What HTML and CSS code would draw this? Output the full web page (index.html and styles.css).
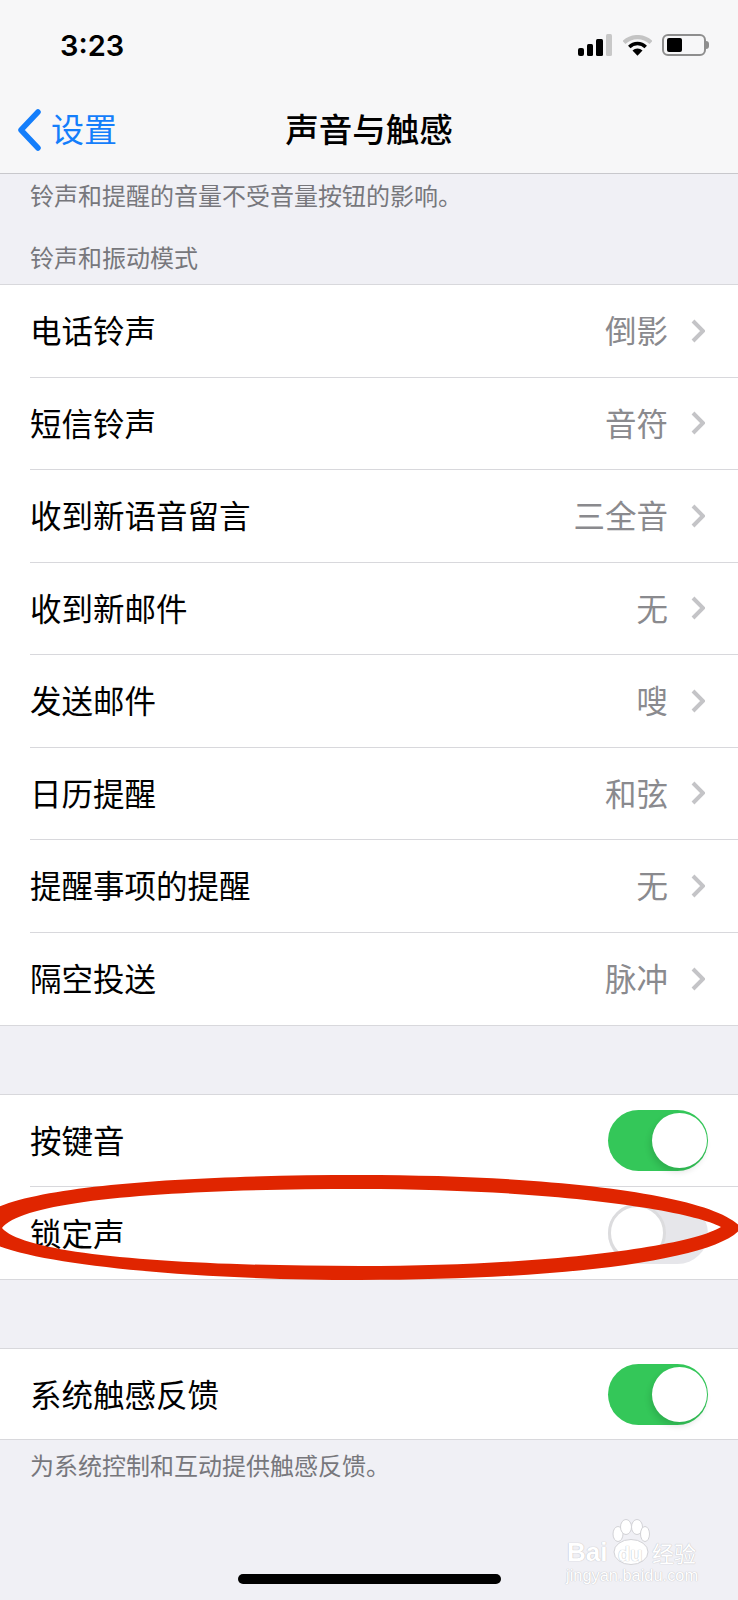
FILE: index.html
```html
<!DOCTYPE html>
<html lang="zh">
<head>
	<meta charset="utf-8">
	<meta name="viewport" content="width=device-width, initial-scale=1">
	<title>声音与触感</title>
	<link rel="stylesheet" href="styles.css">
</head>
<body>
<div class="phone">

<header class="top">
	<div class="status">
		<span class="time">3:23</span>
		<div class="status-icons">
			<svg class="signal" width="34" height="22" viewBox="0 0 34 22">
				<rect x="0" y="14" width="6" height="8" rx="2" fill="#000"/>
				<rect x="9" y="10" width="6" height="12" rx="1.5" fill="#000"/>
				<rect x="18" y="5" width="7" height="17" rx="1.5" fill="#000"/>
				<rect x="28" y="0" width="6" height="22" rx="1.5" fill="#c8c8c8"/>
			</svg>
			<svg class="wifi" width="29" height="21" viewBox="0 0 30 21">
				<path d="M1 7.5 A20 20 0 0 1 29 7.5" fill="none" stroke="#c4c4c4" stroke-width="4.4"/>
				<path d="M6.5 12 A12 12 0 0 1 23.5 12" fill="none" stroke="#000" stroke-width="3.6"/>
				<path d="M15 21 L9.8 15.6 A7.5 7.5 0 0 1 20.2 15.6 Z" fill="#000"/>
			</svg>
			<div class="battery">
				<div class="battery-body"><div class="battery-fill"></div></div>
				<div class="battery-nub"></div>
			</div>
		</div>
	</div>
	<nav class="nav">
		<a class="back">
			<svg width="24" height="42" viewBox="0 0 24 42">
				<path d="M21 3 L4 21 L21 39" fill="none" stroke="#147efb" stroke-width="5.5" stroke-linecap="round" stroke-linejoin="round"/>
			</svg>
			<span>设置</span>
		</a>
		<h1 class="title">声音与触感</h1>
	</nav>
</header>

<main>
	<p class="note note-top">铃声和提醒的音量不受音量按钮的影响。</p>
	<h2 class="section-label">铃声和振动模式</h2>

	<ul class="group">
		<li class="row"><span>电话铃声</span><span class="value">倒影</span><svg class="chevron" width="14" height="24" viewBox="0 0 14 24"><path d="M2 2 L12 12 L2 22" /></svg></li>
		<li class="row"><span>短信铃声</span><span class="value">音符</span><svg class="chevron" width="14" height="24" viewBox="0 0 14 24"><path d="M2 2 L12 12 L2 22" /></svg></li>
		<li class="row"><span>收到新语音留言</span><span class="value">三全音</span><svg class="chevron" width="14" height="24" viewBox="0 0 14 24"><path d="M2 2 L12 12 L2 22" /></svg></li>
		<li class="row"><span>收到新邮件</span><span class="value">无</span><svg class="chevron" width="14" height="24" viewBox="0 0 14 24"><path d="M2 2 L12 12 L2 22" /></svg></li>
		<li class="row"><span>发送邮件</span><span class="value">嗖</span><svg class="chevron" width="14" height="24" viewBox="0 0 14 24"><path d="M2 2 L12 12 L2 22" /></svg></li>
		<li class="row"><span>日历提醒</span><span class="value">和弦</span><svg class="chevron" width="14" height="24" viewBox="0 0 14 24"><path d="M2 2 L12 12 L2 22" /></svg></li>
		<li class="row"><span>提醒事项的提醒</span><span class="value">无</span><svg class="chevron" width="14" height="24" viewBox="0 0 14 24"><path d="M2 2 L12 12 L2 22" /></svg></li>
		<li class="row"><span>隔空投送</span><span class="value">脉冲</span><svg class="chevron" width="14" height="24" viewBox="0 0 14 24"><path d="M2 2 L12 12 L2 22" /></svg></li>
	</ul>

	<ul class="group group-keys">
		<li class="row"><span>按键音</span><div class="switch on"><div class="knob"></div></div></li>
		<li class="row"><span>锁定声</span><div class="switch"><div class="knob"></div></div></li>
	</ul>

	<ul class="group group-haptic">
		<li class="row"><span>系统触感反馈</span><div class="switch on"><div class="knob"></div></div></li>
	</ul>
	<p class="note note-bottom">为系统控制和互动提供触感反馈。</p>
</main>

<!-- red marker drawn over the screenshot -->
<svg class="marker" width="738" height="115" viewBox="0 1170 738 115">
	<path fill="#e02500" fill-rule="evenodd" d="M741 1228 C718 1196 560 1175 360 1175 C170 1175 -24 1188 -24 1228 C-24 1260 170 1280 360 1280 C560 1280 718 1260 741 1228 Z M721 1227 C690 1210 550 1189 360 1189 C170 1189 24 1200 2 1228 C24 1254 170 1266 360 1266 C550 1266 690 1246 721 1227 Z"/>
</svg>

<div class="watermark">
	<svg class="paw" width="38" height="46" viewBox="0 0 38 46">
		<ellipse cx="6" cy="15" rx="5" ry="7.5"/>
		<ellipse cx="14" cy="8" rx="5.5" ry="7.5"/>
		<ellipse cx="25" cy="8" rx="5.5" ry="7.5"/>
		<ellipse cx="33" cy="15" rx="4.5" ry="7.5"/>
		<ellipse cx="19" cy="33" rx="17" ry="12.5"/>
	</svg>
	<span class="wm-bai">Bai</span>
	<span class="wm-du">du</span>
	<span class="wm-cn">经验</span>
	<span class="wm-url">jingyan.baidu.com</span>
</div>

<div class="home-bar"></div>

</div>
</body>
</html>
```

FILE: styles.css
```css
html, *, *::before,
*::after{
	box-sizing: border-box;
}
body{
	margin: 0;
	overflow: hidden;
	background: #f0f0f5;
	font-family: "Noto Sans CJK SC", "Liberation Sans", sans-serif;
	color: #000;
}
.phone{
	position: relative;
	width: 738px;
	height: 1600px;
	overflow: hidden;
	background: #f0f0f5;
}

/* top bar */
.top{
	height: 174px;
	background: #f7f7f8;
	border-bottom: 1px solid #c8c8cc;
}
.status{
	height: 90px;
	display: flex;
	justify-content: space-between;
	align-items: center;
	padding: 0 29px 0 60px;
}
.time{
	font-family: Inter, "Liberation Sans", sans-serif;
	font-size: 29px;
	font-weight: 600;
	line-height: 1;
}
.status-icons{
	display: flex;
	align-items: center;
}
.signal{
	margin-right: 11px;
}
.wifi{
	margin-right: 10px;
}
.battery{
	display: flex;
	align-items: center;
}
.battery-body{
	width: 44px;
	height: 22px;
	border: 2px solid #8e8e8e;
	border-radius: 6px;
	padding: 2px 3px;
}
.battery-fill{
	width: 15px;
	height: 100%;
	background: #000;
	border-radius: 2px;
}
.battery-nub{
	width: 3px;
	height: 8px;
	background: #8e8e8e;
	border-radius: 0 3px 3px 0;
}
.nav{
	position: relative;
	height: 83px;
	display: flex;
	align-items: center;
	justify-content: center;
}
.back{
	position: absolute;
	left: 17px;
	top: 15px;
	display: flex;
	align-items: center;
	gap: 10px;
	color: #147efb;
	font-size: 33px;
	line-height: 42px;
}
.back svg{
	margin-top: 4px;
}
.title{
	margin: 0;
	font-size: 33.5px;
	font-weight: 500;
	line-height: 42px;
	position: relative;
	top: -4px;
}

/* content */
.note, .section-label{
	margin: 0;
	padding-left: 30px;
	font-size: 24px;
	font-weight: 400;
	line-height: 34px;
	color: #77777c;
}
.note-top{
	padding-top: 4px;
}
.section-label{
	margin-top: 28px;
	margin-bottom: 10px;
}
.note-bottom{
	margin-top: 8px;
}
.group{
	list-style: none;
	margin: 0;
	padding: 0;
	background: #fff;
	border-top: 1px solid #d8d8dc;
	border-bottom: 1px solid #d8d8dc;
}
.group-keys{
	margin-top: 68px;
}
.group-haptic{
	margin-top: 68px;
}
.row{
	height: 92.5px;
	margin-left: 30px;
	display: flex;
	align-items: center;
	font-size: 31.5px;
	border-bottom: 1px solid #d8d8dc;
}
.row > span{
	margin-bottom: 3px;
}
.row:last-child{
	border-bottom: 0;
}
.group-keys .row{
	height: 92px;
}
.group-haptic .row{
	height: 90px;
}
.value{
	margin-left: auto;
	color: #8a8a8e;
}
.chevron{
	margin-left: 23px;
	margin-right: 33px;
}
.chevron path{
	fill: none;
	stroke: #c4c4c7;
	stroke-width: 4;
}

/* switches */
.switch{
	width: 100px;
	height: 61px;
	margin-left: auto;
	margin-right: 30px;
	padding: 1px 0;
	border-radius: 31px;
	background: #e6e6ea;
	display: flex;
}
.switch.on{
	padding: 3px 1px;
	background: #34c759;
	justify-content: flex-end;
}
.knob{
	width: 58px;
	height: 58px;
	border: 3px solid #dcdcde;
	border-radius: 50%;
	background: #fff;
}
.switch.on .knob{
	width: 55px;
	height: 55px;
	border: 0;
	box-shadow: -2px 4px 6px rgba(0, 0, 0, 0.12);
}

/* things lying on top of the screen */
.marker{
	position: absolute;
	left: 0;
	top: 1170px;
}
.watermark{
	position: absolute;
	left: 564px;
	top: 1518px;
	width: 140px;
	height: 68px;
	color: #fff;
}
.watermark span{
	position: absolute;
	white-space: nowrap;
	text-shadow: 0 0 1px #c4c4c8, 0 0 1px #c4c4c8;
}
.paw{
	position: absolute;
	left: 48px;
	top: 1px;
	fill: #fff;
	stroke: #d2d2d6;
	stroke-width: 1;
}
.wm-bai{
	left: 3px;
	top: 21px;
	font-family: "Liberation Sans", sans-serif;
	font-size: 26px;
	font-weight: 700;
	line-height: 26px;
}
.wm-du{
	left: 54px;
	top: 25px;
	font-family: "Liberation Sans", sans-serif;
	font-size: 20px;
	font-weight: 700;
	line-height: 22px;
}
.wm-cn{
	left: 88px;
	top: 21px;
	font-size: 22px;
	line-height: 26px;
}
.wm-url{
	left: 2px;
	top: 48px;
	font-family: "Liberation Sans", sans-serif;
	font-size: 16.4px;
	line-height: 18px;
}
.home-bar{
	position: absolute;
	left: 238px;
	top: 1574px;
	width: 263px;
	height: 10px;
	border-radius: 5px;
	background: #000;
}
```
